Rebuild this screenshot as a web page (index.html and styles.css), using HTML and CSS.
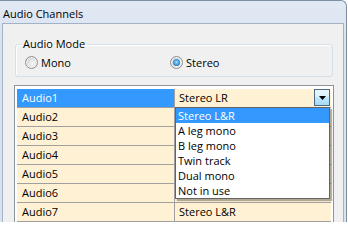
FILE: index.html
```html
<!DOCTYPE html>
<html>
<head>
<meta charset="utf-8">
<link rel="stylesheet" href="styles.css">
</head>
<body>
<div class="window">
  <div class="titlebar">Audio Channels</div>
  <div class="client">
    <fieldset class="group">
      <legend>Audio Mode</legend>
      <div class="radios">
        <label class="radio"><span class="dot"></span>Mono</label>
        <label class="radio checked"><span class="dot"></span>Stereo</label>
      </div>
    </fieldset>
    <div class="grid">
      <div class="row selected">
        <div class="cell name">Audio1</div>
        <div class="cell value editor">Stereo LR
          <span class="ddbtn"><svg width="7" height="4" viewBox="0 0 7 4"><polygon points="0,0 7,0 3.5,4" fill="#000"/></svg></span>
          <ul class="droplist">
            <li class="hot">Stereo L&amp;R</li>
            <li>A leg mono</li>
            <li>B leg mono</li>
            <li>Twin track</li>
            <li>Dual mono</li>
            <li>Not in use</li>
          </ul>
        </div>
      </div>
      <div class="row"><div class="cell name">Audio2</div><div class="cell value"></div></div>
      <div class="row"><div class="cell name">Audio3</div><div class="cell value"></div></div>
      <div class="row"><div class="cell name">Audio4</div><div class="cell value"></div></div>
      <div class="row"><div class="cell name">Audio5</div><div class="cell value"></div></div>
      <div class="row"><div class="cell name">Audio6</div><div class="cell value"></div></div>
      <div class="row"><div class="cell name">Audio7</div><div class="cell value">Stereo L&amp;R</div></div>
    </div>
  </div>
</div>
</body>
</html>
```

FILE: styles.css
```css
html, body {
  margin: 0;
  padding: 0;
  background: #ffffff;
}

body {
  font-family: "Open Sans", "Noto Sans", sans-serif;
  font-size: 11px;
  color: #000;
}

.window {
  box-sizing: border-box;
  width: 347px;
  height: 222px;
  overflow: hidden;
  display: flex;
  flex-direction: column;
  background: linear-gradient(#e1e9f4, #d9e3f0 40px, #d9e3f0);
  border-top: 1px solid #7f8fa3;
  border-right: 1px solid #7f8fa3;
  border-top-right-radius: 6px;
}

.titlebar {
  box-sizing: border-box;
  height: 22px;
  padding: 3px 0 0 3px;
  line-height: 19px;
  color: #000;
  white-space: nowrap;
}

.client {
  flex: 1;
  margin: 0 2px;
  border: 1px solid #a3b2c5;
  border-bottom: none;
  background: #f0f0f0;
  display: flex;
  flex-direction: column;
}

.group {
  margin: 13px 10px 0 12px;
  padding: 0 5px 6px 5px;
  border: 1px solid #d5dfe5;
  border-radius: 3px;
  box-shadow: inset 1px 1px 0 #fff;
  min-width: 0;
}

.group legend {
  padding: 0 2px 2px;
  line-height: 13px;
}

.radios {
  display: grid;
  grid-template-columns: 145px auto;
  margin: 3px 0 0 4px;
  line-height: 15px;
}

.radio {
  display: flex;
  align-items: center;
  gap: 3px;
}

.dot {
  box-sizing: border-box;
  width: 13px;
  height: 13px;
  border-radius: 50%;
  border: 1px solid #8e8f8f;
  background: radial-gradient(circle at 60% 60%, #f6f6f6 0, #e2e2e2 45%, #bcbcbc 100%);
  box-shadow: inset 0 0 0 1px #f2f2f2;
  display: flex;
  align-items: center;
  justify-content: center;
}

.checked .dot::after {
  content: "";
  width: 7px;
  height: 7px;
  border-radius: 50%;
  background: radial-gradient(circle at 50% 45%, #a9e4fb 0, #4fa7e2 40%, #17579c 100%);
}

.grid {
  box-sizing: border-box;
  width: 320px;
  margin: 8px 0 0 11px;
  border: 1px solid #8e949c;
  border-bottom: none;
  background: #fff;
  padding: 3px 2px 0 2px;
  flex: 1;
}

.row {
  display: grid;
  grid-template-columns: 157px 156px;
  column-gap: 1px;
  height: 18px;
  background: #a0a0a0;
  border-bottom: 1px solid #a0a0a0;
}

.cell {
  position: relative;
  background: #fff2d4;
  line-height: 18px;
  white-space: nowrap;
}

.name {
  padding-left: 5px;
}

.value {
  padding-left: 4px;
}

.selected .name {
  background: #3399ff;
  color: #fff;
}

.ddbtn {
  position: absolute;
  top: 0;
  right: 1px;
  box-sizing: border-box;
  width: 16px;
  height: 17px;
  border: 1px solid #4a6a86;
  background: linear-gradient(#eaf6fd 0%, #d9f0fc 45%, #bee6fd 50%, #a7d9f5 100%);
  display: flex;
  align-items: center;
  justify-content: center;
}

.ddbtn svg {
  display: block;
  margin-left: 1px;
}

.droplist {
  position: absolute;
  top: 18px;
  left: 0;
  z-index: 5;
  box-sizing: border-box;
  width: 155px;
  margin: 0;
  padding: 0;
  list-style: none;
  background: #fff;
  border: 1px solid #646464;
  box-shadow: 2px 2px 1px rgba(0, 0, 0, 0.3);
}

.droplist li {
  height: 15px;
  line-height: 15px;
  padding-left: 2px;
  color: #000;
}

.droplist li.hot {
  background: #3399ff;
  color: #fff;
}
```
